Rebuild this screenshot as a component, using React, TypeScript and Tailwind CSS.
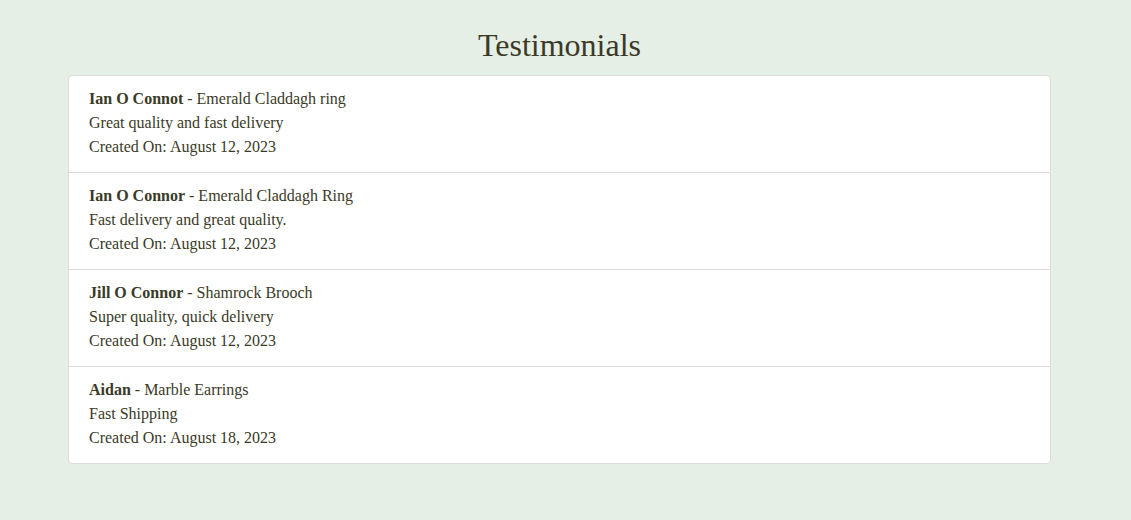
const testimonials = [
  { name: "Ian O Connot", product: "Emerald Claddagh ring", text: "Great quality and fast delivery", date: "August 12, 2023" },
  { name: "Ian O Connor", product: "Emerald Claddagh Ring", text: "Fast delivery and great quality.", date: "August 12, 2023" },
  { name: "Jill O Connor", product: "Shamrock Brooch", text: "Super quality, quick delivery", date: "August 12, 2023" },
  { name: "Aidan", product: "Marble Earrings", text: "Fast Shipping", date: "August 18, 2023" },
];

export default function App() {
  return (
    <div className="min-h-[520px] bg-[#e6efe6] text-[#3a3a27] font-['Liberation_Serif',serif]">
      <div className="ml-[68px] w-[983px] pt-[26px]">
        <h2 className="text-center text-[32px] leading-[38px] mb-[11px]">Testimonials</h2>

        <ul className="bg-white border border-[#dcdcdc] rounded">
          {testimonials.map((t, i) => (
            <li
              key={i}
              className="px-5 pt-[11px] pb-[13px] text-base leading-6 border-b border-[#dcdcdc] last:border-b-0"
            >
              <div>
                <strong>{t.name}</strong> - {t.product}
              </div>
              <div>{t.text}</div>
              <div>Created On: {t.date}</div>
            </li>
          ))}
        </ul>
      </div>
    </div>
  );
}
